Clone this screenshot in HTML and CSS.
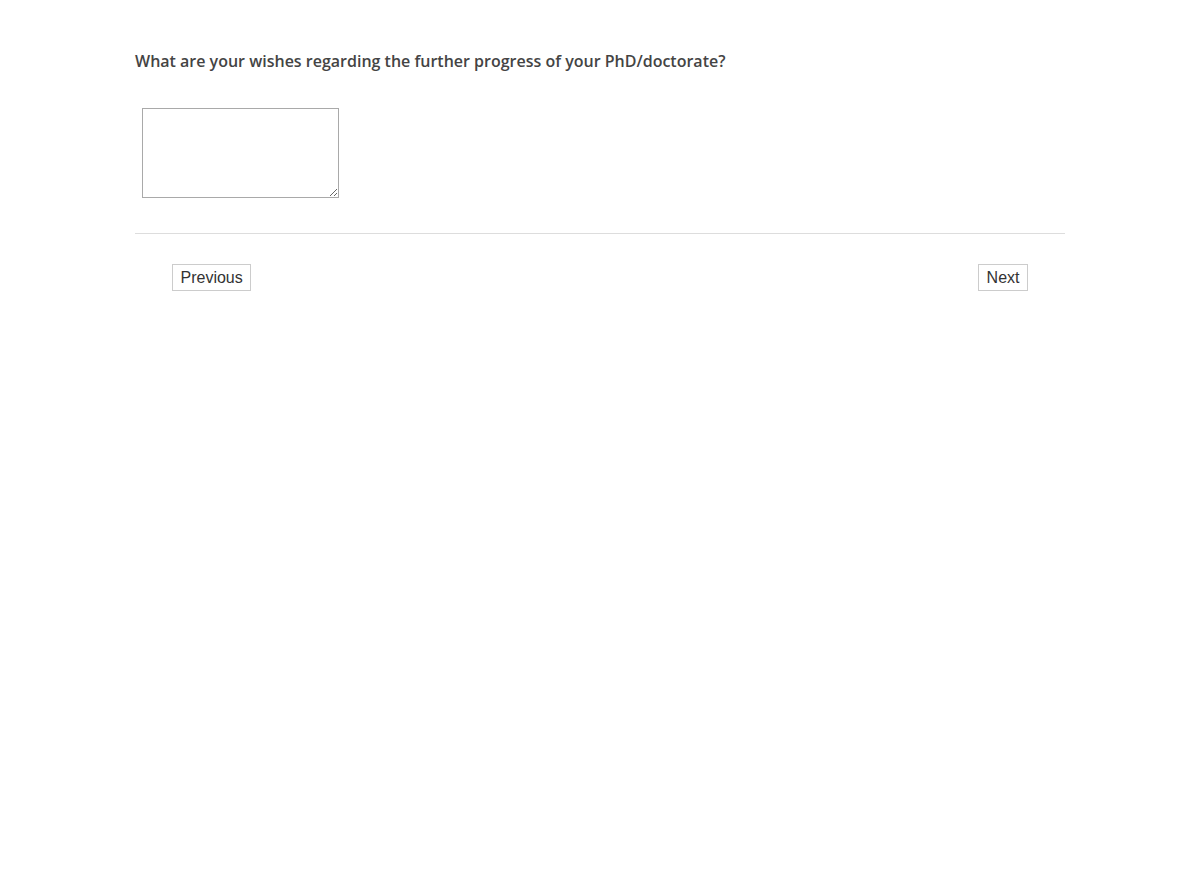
FILE: index.html
```html
<!DOCTYPE html>
<html lang="en">
<head>
    <meta charset="UTF-8">
    <meta name="viewport" content="width=device-width, initial-scale=1.0">
    <title>Survey</title>
    <link rel="stylesheet" href="styles.css">
</head>
<body>
    <div class="container">
        <!-- Question -->
        <form action="#" method="post" class="question">
            <label for="wishes" class="question-text">What are your wishes regarding the further progress of your PhD/doctorate?</label>
            <div class="answer">
                <textarea id="wishes" name="wishes"></textarea>
            </div>
        </form>

        <!-- Navigation -->
        <div class="nav">
            <button type="button">Previous</button>
            <button type="button">Next</button>
        </div>
    </div>
</body>
</html>
```

FILE: styles.css
```css
body {
    margin: 0;
    background: #fff;
    font-family: "Open Sans", sans-serif;
    color: #444;
}

.container {
    width: 930px;
    margin: 0 auto;
    padding-top: 50px;
}

.question {
    border-bottom: 1px solid #ddd;
    padding-bottom: 35px;
}

.question-text {
    display: block;
    font-size: 16px;
    font-weight: 600;
    line-height: 22px;
    color: #444;
}

.answer {
    padding: 36px 0 0 7px;
}

.answer textarea {
    display: block;
    width: 197px;
    height: 90px;
    box-sizing: border-box;
    border: 1px solid #a9a9a9;
    margin: 0;
    padding: 2px;
}

.nav {
    display: flex;
    justify-content: space-between;
    padding: 30px 37px 0;
}

.nav button {
    font-family: "Liberation Sans", Arial, sans-serif;
    font-size: 16px;
    color: #333;
    background: #fff;
    border: 1px solid #ccc;
    padding: 3px 7.5px;
    height: 27px;
    box-sizing: border-box;
    line-height: 19px;
}
```
